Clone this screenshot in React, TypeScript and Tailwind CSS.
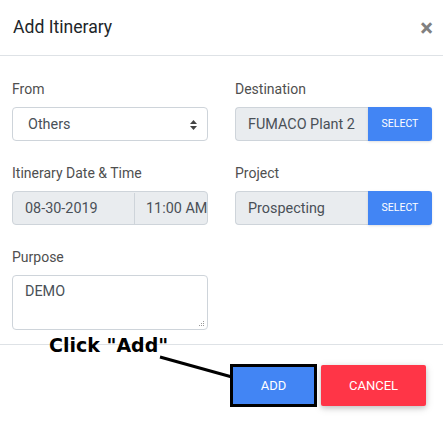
import React from "react";

function Label({ children }: { children: React.ReactNode }) {
  return <div className="h-5 text-[14px] leading-5 text-[#4f4f4f]">{children}</div>;
}

function PickerInput({ value }: { value: string }) {
  return (
    <div className="flex h-[34px]">
      <div className="flex flex-1 items-center overflow-hidden whitespace-nowrap rounded-l-[4px] border border-r-0 border-[#ced4da] bg-[#e9ecef] px-3 pt-px text-[14.4px] text-[#495057]">
        {value}
      </div>
      <button className="w-[64px] rounded-r-[3px] bg-[#4285f4] text-[10.5px] uppercase text-white shadow-sm">
        Select
      </button>
    </div>
  );
}

export default function App() {
  return (
    <div
      className="relative h-[422px] w-[443px] overflow-hidden bg-white"
      style={{ fontFamily: "Roboto, 'Liberation Sans', sans-serif" }}
    >
      {/* header */}
      <div className="flex h-[56px] items-center justify-between border-b border-[#dee2e6] pl-[13px] pr-[10px]">
        <h5 className="text-[17.6px] text-[#212529]">Add Itinerary</h5>
        <span className="text-[24px] font-bold leading-none text-[#808080]">×</span>
      </div>

      {/* body */}
      <div className="grid grid-cols-[196px_197px] gap-x-[27px] gap-y-[22px] pb-[14px] pl-3 pt-[23px]">
        <div className="flex flex-col gap-2">
          <Label>From</Label>
          <div className="flex h-[34px] items-center justify-between rounded-[4px] border border-[#ced4da] bg-white pl-[15px] pr-[10px] pt-px text-[14.4px] text-[#495057]">
            <span>Others</span>
            <svg width="7" height="10" viewBox="0 0 7 10">
              <path d="M3.5 0 L7 4 H0 Z M0 6 H7 L3.5 10 Z" fill="#444" />
            </svg>
          </div>
        </div>
        <div className="flex flex-col gap-2">
          <Label>Destination</Label>
          <PickerInput value="FUMACO Plant 2" />
        </div>

        <div className="flex flex-col gap-2">
          <Label>Itinerary Date &amp; Time</Label>
          <div className="flex h-[34px] overflow-hidden rounded-[4px] border border-[#ced4da] bg-[#e9ecef] pt-px text-[14.4px] text-[#495057]">
            <div className="flex w-[122px] items-center border-r border-[#ced4da] px-3">08-30-2019</div>
            <div className="flex flex-1 items-center overflow-hidden whitespace-nowrap pl-[11px]">11:00 AM</div>
          </div>
        </div>
        <div className="flex flex-col gap-2">
          <Label>Project</Label>
          <PickerInput value="Prospecting" />
        </div>

        <div className="flex flex-col gap-2">
          <Label>Purpose</Label>
          <div className="relative h-[55px] rounded-[4px] border border-[#ced4da] bg-white px-3 pt-[5px] text-[14.4px] text-[#495057]">
            DEMO
            <svg className="absolute bottom-[2px] right-[2px]" width="6" height="6" viewBox="0 0 6 6">
              <g fill="#999">
                <rect x="4" y="0" width="1" height="1" />
                <rect x="2" y="2" width="1" height="1" />
                <rect x="4" y="2" width="1" height="1" />
                <rect x="0" y="4" width="1" height="1" />
                <rect x="2" y="4" width="1" height="1" />
                <rect x="4" y="4" width="1" height="1" />
              </g>
            </svg>
          </div>
        </div>
      </div>

      {/* footer */}
      <div className="flex items-center justify-end gap-1 border-t border-[#dee2e6] pr-[17px] pt-[19px]">
        <button className="h-[43px] w-[87px] border-[3px] border-black bg-[#4285f4] text-[13px] uppercase text-white">
          Add
        </button>
        <button className="h-[41px] w-[105px] rounded-[2px] bg-[#ff3547] text-[13px] uppercase text-white shadow-[0_2px_5px_rgba(0,0,0,0.16),0_2px_10px_rgba(0,0,0,0.12)]">
          Cancel
        </button>
      </div>

      {/* annotation */}
      <div
        className="absolute left-[49px] top-[334px] text-[19px] font-bold leading-[22px] text-black"
        style={{ fontFamily: "'DejaVu Sans', sans-serif" }}
      >
        Click "Add"
      </div>
      <svg className="absolute left-0 top-0" width="443" height="422">
        <line x1="160" y1="357" x2="232" y2="377" stroke="black" strokeWidth="3" />
      </svg>
    </div>
  );
}
